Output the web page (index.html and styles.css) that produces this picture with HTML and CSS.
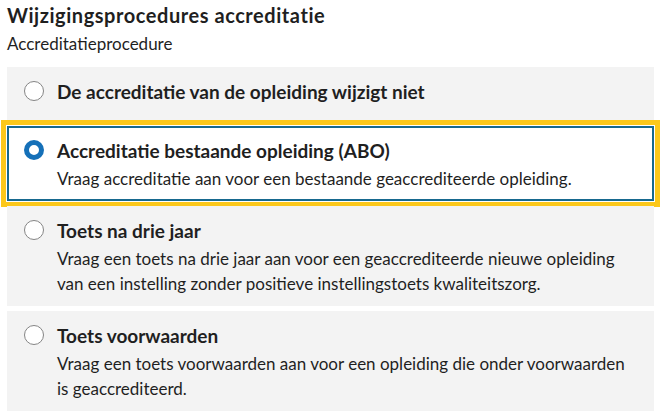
FILE: index.html
```html
<!DOCTYPE html>
<html lang="nl">
<head>
<meta charset="utf-8">
<link rel="stylesheet" href="styles.css">
</head>
<body>
<div class="group" role="radiogroup" aria-labelledby="lg">
  <div class="legend" id="lg">Wijzigingsprocedures accreditatie</div>
  <p class="hint">Accreditatieprocedure</p>
  <div class="options">
    <label class="option">
      <span class="radio"></span>
      <span class="text"><span class="title">De accreditatie van de opleiding wijzigt niet</span></span>
    </label>
    <label class="option selected">
      <span class="radio"></span>
      <span class="text"><span class="title">Accreditatie bestaande opleiding (ABO)</span>
      <span class="desc">Vraag accreditatie aan voor een bestaande geaccrediteerde opleiding.</span></span>
    </label>
    <label class="option">
      <span class="radio"></span>
      <span class="text"><span class="title">Toets na drie jaar</span>
      <span class="desc">Vraag een toets na drie jaar aan voor een geaccrediteerde nieuwe opleiding van een instelling zonder positieve instellingstoets kwaliteitszorg.</span></span>
    </label>
    <label class="option">
      <span class="radio"></span>
      <span class="text"><span class="title">Toets voorwaarden</span>
      <span class="desc">Vraag een toets voorwaarden aan voor een opleiding die onder voorwaarden is geaccrediteerd.</span></span>
    </label>
  </div>
</div>
</body>
</html>
```
FILE: styles.css
```css
html, body {
  margin: 0;
  padding: 0;
  background: #ffffff;
}
body {
  font-family: "Lato", "Noto Sans", sans-serif;
  color: #1f1f1f;
}
.group {
  padding: 3px 11px 0 7px;
}
.legend {
  font-size: 20px;
  font-weight: 700;
  line-height: 24px;
  letter-spacing: 0.55px;
}
.hint {
  margin: 6px 0 0;
  font-size: 17px;
  line-height: 22px;
}
.options {
  margin-top: 12px;
  display: flex;
  flex-direction: column;
  gap: 5px;
}
.option {
  display: flex;
  align-items: flex-start;
  gap: 13px;
  min-height: 54px;
  background: #f3f3f3;
  padding: 12px 17px 10px 17px;
  box-sizing: border-box;
}
.option.selected {
  background: #ffffff;
  border: 2px solid #17698f;
  padding: 10px 15px 8px 15px;
  box-shadow: 0 0 0 1px #ffffff, 0 0 0 6px #fcc81b;
}
.radio {
  flex: none;
  width: 20px;
  height: 20px;
  margin-top: 2px;
  border-radius: 50%;
  background: #ffffff;
  border: 1px solid #858585;
  box-sizing: border-box;
}
.selected .radio {
  border: 5px solid #1570b8;
}
.text {
  display: flex;
  flex-direction: column;
  gap: 2px;
}
.title {
  font-size: 19px;
  font-weight: 700;
  line-height: 26px;
}
.desc {
  font-size: 17px;
  line-height: 25px;
}
```
